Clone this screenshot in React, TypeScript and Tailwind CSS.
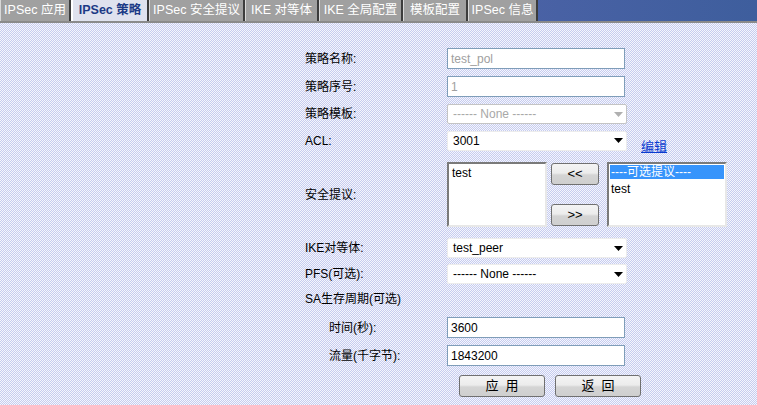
import React from 'react';

const font = { fontFamily: '"Liberation Sans", "Noto Sans CJK SC", sans-serif' };

const tabs = ['IPSec 应用', 'IPSec 策略', 'IPSec 安全提议', 'IKE 对等体', 'IKE 全局配置', '模板配置', 'IPSec 信息'];
const tabWidths = ['w-[71px]', 'w-[78px]', 'w-[96px]', 'w-[74px]', 'w-[84px]', 'w-[65px]', 'w-[70px]'];

function Arrow({ disabled }: { disabled?: boolean }) {
  return (
    <svg width="9" height="5" viewBox="0 0 9 5" className="mr-[3px]">
      <path d="M0 0h9L4.5 5z" fill={disabled ? '#b0b0b0' : '#000'} />
    </svg>
  );
}

function Select({ value, disabled }: { value: string; disabled?: boolean }) {
  return (
    <div
      className={
        'flex h-[20px] w-[180px] items-center justify-between rounded-[2px] bg-white pl-[5px] ' +
        (disabled ? 'border border-[#c4c4c4] text-[#a8a8a8]' : 'border border-[#ececec] text-black')
      }
    >
      <span>{value}</span>
      <Arrow disabled={disabled} />
    </div>
  );
}

function TextBox({ value, disabled }: { value: string; disabled?: boolean }) {
  return (
    <div
      className={
        'flex h-[21px] w-[178px] items-center border border-[#7f9db9] bg-white pl-[3px] ' +
        (disabled ? 'text-[#a0a0a0]' : 'text-black')
      }
    >
      {value}
    </div>
  );
}

function Btn({ children, w }: { children: React.ReactNode; w: string }) {
  return (
    <div
      className={
        w +
        ' flex h-[22px] items-center justify-center rounded-[3px] border border-[#707070] bg-[linear-gradient(#f4f4f4,#ececec_45%,#d4d4d4_55%,#cfcfcf)] text-[13px] text-black'
      }
    >
      {children}
    </div>
  );
}

export default function App() {
  return (
    <div
      style={font}
      className="h-[405px] w-[757px] overflow-hidden bg-[image:repeating-conic-gradient(#c6ccef_0%_25%,#f5f6fd_0%_50%)] bg-[length:2px_2px] text-[12px] text-black"
    >
      <div className="flex h-[21px] bg-[linear-gradient(90deg,#6d84a6,#5565ad_40%,#3e5e9d)]">
        {tabs.map((t, i) => (
          <div
            key={t}
            className={
              tabWidths[i] +
              ' box-border flex h-[21px] shrink-0 items-center justify-center whitespace-nowrap border-r-2 border-r-[#3c3c3c] text-[12.5px] ' +
              (i === 1
                ? 'border-l-2 border-l-white bg-[#dfe2ee] font-bold text-[#1c3a86]'
                : 'border-l border-l-[#d8d8d8] bg-[#a0a0a0] text-white')
            }
          >
            {t}
          </div>
        ))}
      </div>
      <div className="h-[2px] bg-[#8a8a8a]" />

      <div className="flex flex-col pl-[305px] pt-[25px]">
        <div className="flex h-[21px] items-center">
          <div className="w-[142px]">策略名称:</div>
          <TextBox value="test_pol" disabled />
        </div>
        <div className="mt-[7px] flex h-[21px] items-center">
          <div className="w-[142px]">策略序号:</div>
          <TextBox value="1" disabled />
        </div>
        <div className="mt-[7px] flex h-[20px] items-center">
          <div className="w-[142px]">策略模板:</div>
          <Select value="------ None ------" disabled />
        </div>
        <div className="mt-[6px] flex h-[21px] items-center">
          <div className="w-[142px]">ACL:</div>
          <Select value="3001" />
          <a className="ml-[14px] mt-[12px] text-[13px] text-[#0a3bd0] underline">编辑</a>
        </div>
        <div className="mt-[11px] flex h-[65px] items-center">
          <div className="w-[142px]">安全提议:</div>
          <div className="h-[65px] w-[100px] border-2 border-t-[#7a7a7a] border-l-[#7a7a7a] border-r-[#e8e8e8] border-b-[#e8e8e8] bg-white pl-[3px]">
            test
          </div>
          <div className="ml-[4px] flex h-[65px] flex-col justify-between py-[1px]">
            <Btn w="w-[48px]">&lt;&lt;</Btn>
            <Btn w="w-[48px]">&gt;&gt;</Btn>
          </div>
          <div className="ml-[8px] h-[65px] w-[120px] border-2 border-t-[#7a7a7a] border-l-[#7a7a7a] border-r-[#e8e8e8] border-b-[#e8e8e8] bg-white p-[1px]">
            <div className="flex h-[14px] items-center bg-[#3794fb] pl-[1px] text-white">----可选提议----</div>
            <div className="pl-[1px] pt-[1px]">test</div>
          </div>
        </div>
        <div className="mt-[11px] flex h-[20px] items-center">
          <div className="w-[142px]">IKE对等体:</div>
          <Select value="test_peer" />
        </div>
        <div className="mt-[6px] flex h-[20px] items-center">
          <div className="w-[142px]">PFS(可选):</div>
          <Select value="------ None ------" />
        </div>
        <div className="mt-[5px] flex h-[20px] items-center">SA生存周期(可选)</div>
        <div className="mt-[8px] flex h-[21px] items-center">
          <div className="w-[142px] pl-[24px]">时间(秒):</div>
          <TextBox value="3600" />
        </div>
        <div className="mt-[7px] flex h-[21px] items-center">
          <div className="w-[142px] pl-[24px]">流量(千字节):</div>
          <TextBox value="1843200" />
        </div>
        <div className="mt-[9px] flex gap-[10px] pl-[154px]">
          <Btn w="w-[86px]">应&nbsp;&nbsp;用</Btn>
          <Btn w="w-[86px]">返&nbsp;&nbsp;回</Btn>
        </div>
      </div>
    </div>
  );
}
